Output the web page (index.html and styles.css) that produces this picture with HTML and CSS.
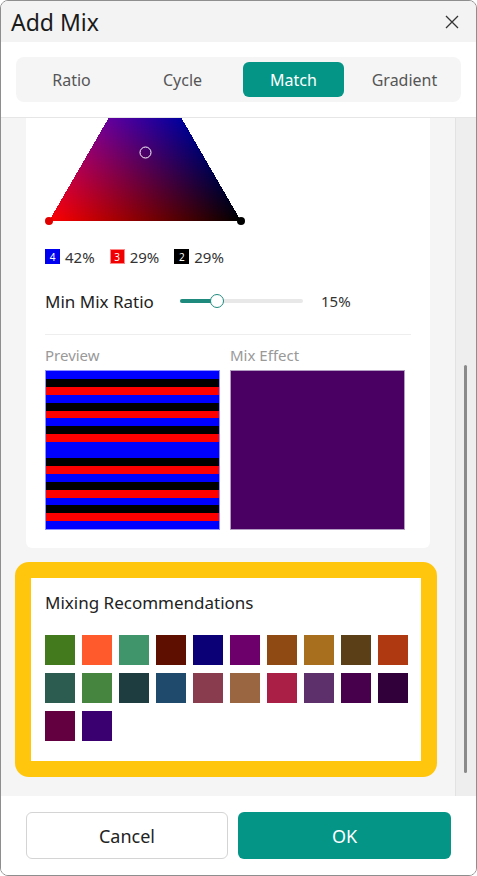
FILE: index.html
```html
<!DOCTYPE html>
<html lang="en">
<head>
  <meta charset="UTF-8" />
  <title>Add Mix</title>
  <link rel="stylesheet" href="styles.css">
</head>
<body>
  <div class="window">
    <div class="titlebar">
      <span class="title">Add Mix</span>
      <svg class="close" width="14" height="14" viewBox="0 0 14 14">
        <path d="M1 1L13 13M13 1L1 13" stroke="#333" stroke-width="1.3" fill="none"/>
      </svg>
    </div>

    <div class="tabs-wrap">
      <div class="tabs">
        <div class="tab">Ratio</div>
        <div class="tab">Cycle</div>
        <div class="tab active">Match</div>
        <div class="tab">Gradient</div>
      </div>
    </div>

    <div class="body">
      <div class="scroll-view">
        <div class="scroll-content">
          <div class="card">
            <canvas id="triangle" width="200" height="180"></canvas>

            <div class="legend">
              <span class="chip blue">4</span><span class="pct">42%</span>
              <span class="chip red">3</span><span class="pct">29%</span>
              <span class="chip black">2</span><span class="pct">29%</span>
            </div>

            <div class="ratio-row">
              <span class="ratio-label">Min Mix Ratio</span>
              <div class="slider">
                <div class="slider-fill"></div>
                <div class="slider-thumb"></div>
              </div>
              <span class="ratio-value">15%</span>
            </div>

            <div class="divider"></div>

            <div class="preview-row">
              <div class="preview-col">
                <div class="preview-label">Preview</div>
                <div class="stripes" id="stripes"></div>
              </div>
              <div class="preview-col">
                <div class="preview-label">Mix Effect</div>
                <div class="mix-box"></div>
              </div>
            </div>
          </div>

          <div class="recommend">
            <div class="recommend-inner">
              <div class="recommend-title">Mixing Recommendations</div>
              <div class="swatches" id="swatches"></div>
            </div>
          </div>
        </div>
      </div>
      <div class="scrollbar"><div class="thumb"></div></div>
    </div>

    <div class="footer">
      <button class="btn cancel">Cancel</button>
      <button class="btn ok">OK</button>
    </div>
  </div>

  <script>
    // ternary colour triangle: blue on top, red bottom-left, black bottom-right
    function drawTriangle() {
      const canvas = document.getElementById("triangle");
      const ctx = canvas.getContext("2d");
      const T = [100, 4], L = [4, 170], R = [196, 170];
      const img = ctx.createImageData(canvas.width, canvas.height);
      const det = (L[1] - R[1]) * (T[0] - R[0]) + (R[0] - L[0]) * (T[1] - R[1]);

      for (let y = 0; y < canvas.height; y++) {
        for (let x = 0; x < canvas.width; x++) {
          let wt = ((L[1] - R[1]) * (x + 0.5 - R[0]) + (R[0] - L[0]) * (y + 0.5 - R[1])) / det;
          let wl = ((R[1] - T[1]) * (x + 0.5 - R[0]) + (T[0] - R[0]) * (y + 0.5 - R[1])) / det;
          let wr = 1 - wt - wl;
          if (wt < 0 || wl < 0 || wr < 0) continue;
          let i = (y * canvas.width + x) * 4;
          img.data[i] = 255 * wl;
          img.data[i + 1] = 0;
          img.data[i + 2] = 255 * wt;
          img.data[i + 3] = 255;
        }
      }
      ctx.putImageData(img, 0, 0);

      ctx.fillStyle = "#e00000";
      ctx.beginPath(); ctx.arc(L[0], L[1], 4, 0, Math.PI * 2); ctx.fill();
      ctx.fillStyle = "#000";
      ctx.beginPath(); ctx.arc(R[0], R[1], 4, 0, Math.PI * 2); ctx.fill();

      ctx.strokeStyle = "#fff";
      ctx.lineWidth = 1;
      ctx.beginPath(); ctx.arc(100.5, 101.5, 5.5, 0, Math.PI * 2); ctx.stroke();
    }

    function drawStripes() {
      const order = "BKRBKRBKRBBKRBKRBKRB";
      const colors = { B: "#0000ff", K: "#000000", R: "#ff0000" };
      let html = "";
      for (const c of order) {
        html += `<div class="stripe" style="background:${colors[c]}"></div>`;
      }
      document.getElementById("stripes").innerHTML = html;
    }

    function drawSwatches() {
      const swatches = [
        "#437a1e", "#ff5a2c", "#40956a", "#5e0f00", "#0b0075", "#6e006b", "#8f4a14", "#a86f1e", "#5a3f17", "#af3a12",
        "#2b5c4f", "#468540", "#1e3d40", "#1f4a6b", "#8a3c4f", "#996641", "#aa1f45", "#5e306b", "#47004b", "#31003b",
        "#620040", "#3a006f"
      ];
      let html = "";
      for (const c of swatches) {
        html += `<div class="swatch" style="background:${c}"></div>`;
      }
      document.getElementById("swatches").innerHTML = html;
    }

    drawTriangle();
    drawStripes();
    drawSwatches();
  </script>
</body>
</html>
```

FILE: styles.css
```css
* {
  box-sizing: border-box;
}
body {
  margin: 0;
  font-family: "Noto Sans", "Open Sans", sans-serif;
  color: #222;
  background: #fff;
}
.window {
  width: 477px;
  height: 876px;
  border: 1px solid #8e8e8e;
  border-radius: 8px;
  overflow: hidden;
  display: flex;
  flex-direction: column;
  background: #fff;
}
.titlebar {
  height: 41px;
  flex: 0 0 41px;
  background: #f3f3f3;
  display: flex;
  align-items: center;
  justify-content: space-between;
  padding: 0 17px 0 10px;
}
.title {
  font-size: 23px;
  color: #1a1a1a;
}
.close {
  margin-top: 1px;
}
.tabs-wrap {
  flex: 0 0 75px;
  padding: 15px 15px;
}
.tabs {
  height: 45px;
  background: #f5f5f5;
  border-radius: 8px;
  padding: 5px;
  display: flex;
  gap: 10px;
}
.tab {
  width: 101px;
  display: flex;
  align-items: center;
  justify-content: center;
  font-size: 16px;
  color: #555;
  border-radius: 6px;
}
.tab.active {
  background: #049587;
  color: #fff;
}
.body {
  flex: 1;
  display: flex;
  border-top: 1px solid #e6e6e6;
  background: #f5f5f5;
  min-height: 0;
}
.scroll-view {
  flex: 1;
  overflow: hidden;
}
.scroll-content {
  margin-top: -86px;
  padding-bottom: 18px;
}
.card {
  margin-left: 25px;
  width: 404px;
  background: #fff;
  border-radius: 6px;
  padding: 19px 19px 18px;
}
#triangle {
  display: block;
}
.legend {
  margin-top: 18px;
  display: flex;
  align-items: center;
  height: 15px;
}
.chip {
  width: 15px;
  height: 15px;
  font-size: 10px;
  color: #fff;
  display: flex;
  align-items: center;
  justify-content: center;
  margin-right: 5px;
}
.chip.blue { background: #0000f0; }
.chip.red { background: #f00000; border: 1px solid #f88; }
.chip.black { background: #000; }
.pct {
  font-size: 15px;
  color: #333;
  margin-right: 15px;
}
.ratio-row {
  margin-top: 24px;
  height: 26px;
  display: flex;
  align-items: center;
}
.ratio-label {
  width: 135px;
  font-size: 17px;
  color: #222;
}
.slider {
  position: relative;
  width: 123px;
  height: 4px;
  border-radius: 2px;
  background: #e8e8e8;
}
.slider-fill {
  width: 37px;
  height: 4px;
  border-radius: 2px;
  background: #1e8a7d;
}
.slider-thumb {
  position: absolute;
  left: 30px;
  top: -5px;
  width: 14px;
  height: 14px;
  border-radius: 50%;
  background: #fff;
  border: 1px solid #1e8a7d;
}
.ratio-value {
  margin-left: 18px;
  font-size: 15px;
  color: #333;
}
.divider {
  margin-top: 20px;
  height: 1px;
  background: #eeeeee;
}
.preview-row {
  margin-top: 10px;
  display: flex;
  gap: 10px;
}
.preview-label {
  font-size: 15px;
  line-height: 20px;
  color: #999;
  margin-bottom: 5px;
}
.stripes {
  width: 175px;
  height: 160px;
  border: 1px solid #8f8fff;
  display: flex;
  flex-direction: column;
}
.stripe {
  flex: 1;
}
.mix-box {
  width: 175px;
  height: 160px;
  background: #4a0062;
  border: 1px solid #b39cc2;
}
.recommend {
  margin: 14px 0 0 14px;
  width: 422px;
  border: 16px solid #ffc60d;
  border-radius: 14px;
  background: #fff;
}
.recommend-inner {
  padding: 13px 8px 20px 14px;
}
.recommend-title {
  font-size: 17px;
  line-height: 24px;
  color: #222;
}
.swatches {
  margin-top: 20px;
  display: flex;
  flex-wrap: wrap;
  gap: 8px 7px;
}
.swatch {
  width: 30px;
  height: 30px;
}
.scrollbar {
  flex: 0 0 21px;
  background: #eeeeee;
  border-left: 1px solid #e2e2e2;
  padding-left: 8px;
}
.thumb {
  margin-top: 247px;
  width: 3px;
  height: 408px;
  border-radius: 2px;
  background: #8a8a8a;
}
.footer {
  flex: 0 0 79px;
  display: flex;
  gap: 10px;
  padding: 16px 25px;
  background: #fff;
}
.btn {
  font-family: inherit;
  font-size: 18px;
  height: 47px;
  border-radius: 6px;
  cursor: pointer;
}
.cancel {
  flex: 0 0 202px;
  background: #fff;
  border: 1px solid #d4d4d4;
  color: #222;
}
.ok {
  flex: 1;
  background: #049587;
  border: none;
  color: #fff;
}
```
